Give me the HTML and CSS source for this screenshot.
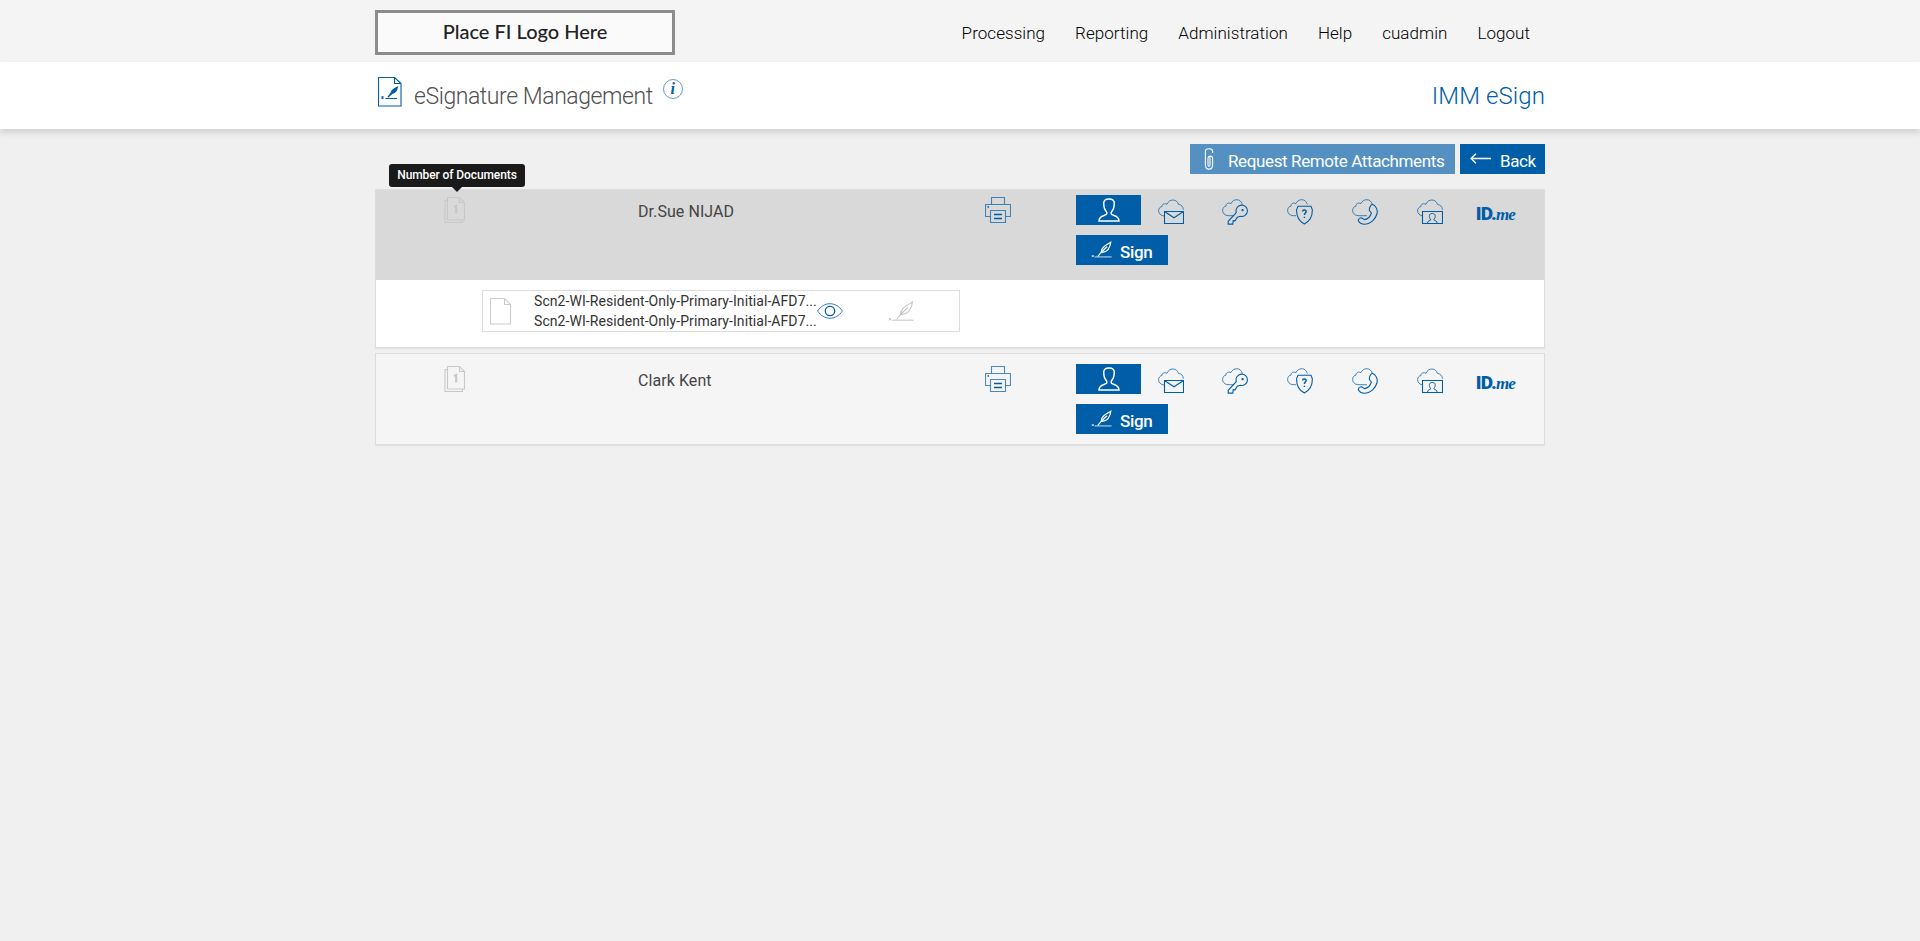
FILE: index.html
```html
<!DOCTYPE html>
<html lang="en">
<head>
  <meta charset="UTF-8" />
  <meta name="viewport" content="width=device-width, initial-scale=1.0"/>
  <title>eSignature Management</title>
  <link rel="stylesheet" href="styles.css">
</head>
<body>
  <!-- Icon sprite -->
  <svg class="sprite" width="0" height="0">
    <symbol id="docs" viewBox="0 0 22 26">
      <path d="M3.500 .500H15.500l5 5v17.500h-17zM15.500.500v5h5M3.500 3.500h-2.500v22h17.500v-2.500"/>
      <path d="M10 10l2.200-1v7.500" stroke-width="2.200"/>
    </symbol>
    <symbol id="doc" viewBox="0 0 22 27">
      <path d="M.5.500h14l6 6v19.500H.5zM14.500.500v6h6"/>
    </symbol>
    <symbol id="printer" viewBox="0 0 26 26">
      <path d="M6.500 7.500V.5h13v7M5.500 19.500H.5v-12h25v12h-5" opacity=".7"/>
      <path d="M5.500 13.500h15v12h-15z" opacity=".7"/>
      <path d="M9 17.500h8M9 21.500h8M2.500 10h1.500" stroke-width="1.300"/>
    </symbol>
    <symbol id="person" viewBox="0 0 22 24">
      <path d="M11 1c-3.800 0-5.500 1.800-5.300 4.600.1 3.300.5 5.900 2.700 8 .8 1.200.6 2.600-.4 3.100C5.500 18 1 18 1 23h20c0-5-4.500-5-7-6.300-1-.5-1.200-1.900-.4-3.100 2.200-2.100 2.600-4.700 2.700-8C16.500 2.800 14.800 1 11 1z"/>
    </symbol>
    <symbol id="cloud" viewBox="0 0 26 26">
      <path d="M6 17C2.500 16.700.6 14.200.6 11.800.6 9.300 2.200 7.700 4 7.600 3.700 5 6.500 4 9 5.300 10 2.500 12.300 1 14.800 1c3 0 5 1.800 5.600 4.400 2.900.3 4.900 2.300 5 5.300" stroke-width=".9" opacity=".8"/>
    </symbol>
    <symbol id="mail" viewBox="0 0 26 26">
      <use href="#cloud"/>
      <path d="M6.500 12.500h19v12h-19zM6.500 12.500l9.500 6.300 9.500-6.300"/>
    </symbol>
    <symbol id="cloud-open" viewBox="0 0 26 26">
      <path d="M9 16.700H6C2.500 16.500.6 14 .6 11.500.6 9 2.200 7.200 4 7.200 3.700 4.500 6.500 3.300 9 4.600 10 2 12.300.7 14.800.7c2.700 0 4.700 1.600 5.500 4.800" stroke-width=".9" opacity=".8"/>
    </symbol>
    <symbol id="key" viewBox="0 0 26 26">
      <use href="#cloud-open"/>
      <path d="M9 16.700h3" stroke-width=".9" opacity=".8"/>
      <path d="M14.300 13.500a5.700 5.700 0 1 1 4 3.800l-3 1-2.300 3.600-1.800-.3-.4 3.500H6.200v-2.800z"/>
      <circle cx="20.600" cy="11.200" r=".6"/>
    </symbol>
    <symbol id="shield" viewBox="0 0 26 26">
      <use href="#cloud-open"/>
      <path d="M11 7.200h13l1.300 3.300c.4 7-2.300 11.500-8 14.600-5.700-3.100-8-7.600-7.700-14.600z"/>
      <path d="M15.500 12.500c.3-2.300 4-1.700 3.600.3-.2 1.200-1.700 1.500-1.700 3.200M17.400 17.700v1.200" stroke-width="1.500"/>
    </symbol>
    <symbol id="phone" viewBox="0 0 26 26">
      <use href="#cloud-open"/>
      <path d="M9 16.700h6" stroke-width=".9" opacity=".8"/>
      <path d="M20.500 5.300c3.500 1.500 5.500 5.500 4.400 9.700-1.500 5.500-6.500 10-12 10.200-3 0-5.700-1.300-6.600-3.700 0-1.500 1.600-2.700 3.200-2.700l3 1.800c3-.6 6-3.400 6.900-6.600l-2-2.500c-.3-2.200 1-5.500 3.100-6.200z"/>
    </symbol>
    <symbol id="idcard" viewBox="0 0 26 26">
      <use href="#cloud"/>
      <path d="M5.500 12.500h20v12h-20z"/>
      <path d="M10.500 24c.2-2.500 2.300-2 3.300-3.200-2.200-3-2-6.300 1.500-6.300s3.700 3.300 1.500 6.300c1 1.200 3.100.7 3.300 3.200" stroke-width="1"/>
    </symbol>
    <symbol id="quill" viewBox="0 0 26 20">
      <path d="M4.500 19.200H25.500M1 17l2.400 2.400M3.400 17L1 19.400" stroke-width="1"/>
      <path d="M8.500 18.500l4-5C12.500 7.500 18 5 24.500 1c-.8 6-3.800 11.500-9.500 12.300l-3 .7M12.500 13.500c3-3 5-5 7.500-7"/>
    </symbol>
    <symbol id="eye" viewBox="0 0 26 16">
      <path d="M.6 8C7-1.700 19-1.700 25.400 8 19 17.700 7 17.700.6 8z" stroke-width=".8"/>
      <circle cx="13" cy="8" r="4.700" stroke-width="1.300"/>
    </symbol>
    <symbol id="clip" viewBox="0 0 10 22">
      <path d="M8.600 5V3.500C8.600-.2 1.400-.2 1.400 3.500V17c0 5.500 7.200 5.500 7.200 0v-6.500c0-3.300-4.600-3.300-4.600 0V17c0 1.500 2 1.500 2 0V8"/>
    </symbol>
    <symbol id="arrow" viewBox="0 0 21 11">
      <path d="M21 5.500H1M6 .7L1 5.500l5 4.800" stroke-width="1.300"/>
    </symbol>
    <symbol id="esign" viewBox="0 0 24 30">
      <path d="M.5.500h16l6.500 6v22.500H.5zM16.500.500v6H23"/>
      <path d="M7.500 21.500H19M3.500 19.500l2 2M5.500 19.500l-2 2"/>
      <path d="M10 20l3-4c.5-3 3-4.500 6.500-6-.6 3.500-2.500 6-5.500 6.500z" fill="currentColor"/>
    </symbol>
  </svg>

  <!-- Top navigation -->
  <header class="topbar">
    <div class="container topbar-inner">
      <div class="logo">Place FI Logo Here</div>
      <nav class="nav">
        <a>Processing</a>
        <a>Reporting</a>
        <a>Administration</a>
        <a>Help</a>
        <a>cuadmin</a>
        <a>Logout</a>
      </nav>
    </div>
  </header>

  <!-- Page title -->
  <div class="titlebar">
    <div class="container titlebar-inner">
      <svg class="icon title-icon"><use href="#esign"/></svg>
      <h1>eSignature Management</h1>
      <span class="info">i</span>
      <span class="product">IMM eSign</span>
    </div>
  </div>

  <main class="container">
    <div class="toolbar">
      <button class="btn btn-disabled"><svg class="icon clip"><use href="#clip"/></svg>Request Remote Attachments</button>
      <button class="btn btn-back"><svg class="icon arrow"><use href="#arrow"/></svg>Back</button>
    </div>

    <!-- Signer 1 -->
    <section class="signer">
      <div class="signer-head active">
        <div class="doc-count">
          <svg class="icon docs"><use href="#docs"/></svg>
          <span class="tooltip">Number of Documents</span>
        </div>
        <div class="name">Dr.Sue NIJAD</div>
        <svg class="icon printer"><use href="#printer"/></svg>
        <div class="actions">
          <div class="methods">
            <button class="btn person"><svg class="icon"><use href="#person"/></svg></button>
            <svg class="icon method"><use href="#mail"/></svg>
            <svg class="icon method"><use href="#key"/></svg>
            <svg class="icon method"><use href="#shield"/></svg>
            <svg class="icon method"><use href="#phone"/></svg>
            <svg class="icon method"><use href="#idcard"/></svg>
            <span class="idme">ID.<i>me</i></span>
          </div>
          <button class="btn sign"><svg class="icon"><use href="#quill"/></svg>Sign</button>
        </div>
      </div>
      <div class="documents">
        <div class="document">
          <svg class="icon doc"><use href="#doc"/></svg>
          <div class="doc-names">
            <div>Scn2-WI-Resident-Only-Primary-Initial-AFD7...</div>
            <div>Scn2-WI-Resident-Only-Primary-Initial-AFD7...</div>
          </div>
          <svg class="icon eye"><use href="#eye"/></svg>
          <svg class="icon quill"><use href="#quill"/></svg>
        </div>
      </div>
    </section>

    <!-- Signer 2 -->
    <section class="signer">
      <div class="signer-head">
        <div class="doc-count">
          <svg class="icon docs"><use href="#docs"/></svg>
        </div>
        <div class="name">Clark Kent</div>
        <svg class="icon printer"><use href="#printer"/></svg>
        <div class="actions">
          <div class="methods">
            <button class="btn person"><svg class="icon"><use href="#person"/></svg></button>
            <svg class="icon method"><use href="#mail"/></svg>
            <svg class="icon method"><use href="#key"/></svg>
            <svg class="icon method"><use href="#shield"/></svg>
            <svg class="icon method"><use href="#phone"/></svg>
            <svg class="icon method"><use href="#idcard"/></svg>
            <span class="idme">ID.<i>me</i></span>
          </div>
          <button class="btn sign"><svg class="icon"><use href="#quill"/></svg>Sign</button>
        </div>
      </div>
    </section>
  </main>
</body>
</html>
```
FILE: styles.css
```css
* {
  box-sizing: border-box;
}

body {
  margin: 0;
  background: #f0f0f0;
  color: #444;
  font-family: Roboto, sans-serif;
}

.sprite {
  display: block;
}

.container {
  width: 1170px;
  margin: 0 auto;
}

.icon {
  display: block;
  flex: none;
  fill: none;
  stroke: currentColor;
  stroke-width: 1.1;
  color: #005da8;
}

/* Top bar */
.topbar {
  height: 62px;
  background: #f4f4f4;
}

.topbar-inner {
  display: flex;
  justify-content: space-between;
  padding-top: 10px;
}

.logo {
  width: 300px;
  height: 45px;
  border: 3px solid #8c8c8c;
  background: #fafafa;
  color: #222;
  font: 500 20px/37px Lato, sans-serif;
  text-align: center;
}

.nav {
  display: flex;
  gap: 30px;
  padding: 12px 15px 0 0;
  font-size: 17px;
  font-weight: 300;
  line-height: 22px;
  letter-spacing: 0.05px;
  color: #000;
}

/* Title bar */
.titlebar {
  height: 67px;
  background: #fff;
  box-shadow: 0 4px 6px rgba(0, 0, 0, 0.12);
}

.titlebar-inner {
  display: flex;
  align-items: flex-start;
}

.title-icon {
  width: 24px;
  height: 30px;
  margin: 15px 0 0 3px;
}

h1 {
  margin: 21px 0 0 12px;
  color: #505050;
  font-size: 23px;
  font-weight: 300;
  line-height: 28px;
  letter-spacing: -0.43px;
}

.info {
  width: 20px;
  height: 20px;
  margin: 17px 0 0 10px;
  border: 1px solid #6b9cc7;
  border-radius: 50%;
  color: #005da8;
  font: italic bold 16px/17px "Liberation Serif", serif;
  text-align: center;
}

.product {
  margin: 20px 0 0 auto;
  color: #005da8;
  font-size: 24px;
  font-weight: 300;
  line-height: 28px;
  letter-spacing: 0.1px;
}

/* Buttons */
.btn {
  display: flex;
  height: 30px;
  padding: 0;
  border: 0;
  background: #005da8;
  color: #fff;
  font: 400 17px/34px Roboto, sans-serif;
  white-space: nowrap;
}

.btn .icon {
  color: #fff;
}

.toolbar {
  display: flex;
  justify-content: flex-end;
  gap: 5px;
  padding: 15px 0;
}

.toolbar .btn {
  letter-spacing: -0.38px;
}

.btn-disabled {
  width: 265px;
  background: #5490c1;
}

.btn-back {
  width: 85px;
}

.clip {
  width: 10px;
  height: 22px;
  margin: 4px 14px 0 14px;
}

.arrow {
  width: 21px;
  height: 11px;
  margin: 9px 9px 0 10px;
}

/* Signers */
.signer {
  margin-bottom: 5px;
  border: 1px solid #ddd;
  background: #fff;
  box-shadow: 0 1px 1px rgba(0, 0, 0, 0.06);
}

.signer-head {
  display: grid;
  grid-template-columns: 263px 346px 91px 1fr;
  align-items: start;
  height: 90px;
  padding-top: 10px;
  background: #f5f5f5;
}

.signer-head.active {
  padding-top: 5px;
  background: #d9d9d9;
}

.doc-count {
  position: relative;
  padding: 2px 0 0 68px;
}

.docs {
  width: 22px;
  height: 26px;
  color: #c8c8c8;
}

.tooltip {
  position: absolute;
  left: 13px;
  bottom: 36px;
  width: 136px;
  height: 23px;
  border-radius: 3px;
  background: #1a1a1a;
  color: #fff;
  font-size: 12px;
  font-weight: 500;
  line-height: 22px;
  letter-spacing: -0.1px;
  text-align: center;
}

.tooltip::after {
  content: "";
  position: absolute;
  left: 63px;
  top: 23px;
  border: 5px solid transparent;
  border-top-color: #1a1a1a;
  border-bottom: 0;
}

.name {
  padding-top: 7px;
  margin-left: -1px;
  font-size: 16px;
  line-height: 20px;
  letter-spacing: 0.07px;
}

.printer {
  width: 26px;
  height: 26px;
  margin-top: 2px;
}

.methods {
  display: flex;
  height: 30px;
}

.person {
  width: 65px;
  justify-content: center;
  margin-right: 16.5px;
}

.person .icon {
  width: 22px;
  height: 24px;
  margin-top: 3px;
  stroke-width: 1.5;
}

.method {
  width: 26px;
  height: 26px;
  margin: 4px 38.8px 0 0;
}

/* the ID.me wordmark is wider than the icons */
.method:nth-last-child(2) {
  margin-right: 33px;
}

.idme {
  margin-top: 8px;
  color: #005da8;
  font-size: 19px;
  font-weight: 900;
  line-height: 22px;
  letter-spacing: -0.8px;
}

.idme i {
  font: italic bold 17px/22px "Liberation Serif", serif;
  letter-spacing: -0.9px;
}

.sign {
  width: 92px;
  margin-top: 10px;
  font-weight: 500;
  letter-spacing: -0.3px;
}

.sign .icon {
  width: 21px;
  height: 17px;
  margin: 6px 8px 0 15px;
  stroke-width: 1.5;
}

/* Documents */
.documents {
  height: 67px;
  padding: 10px 0 0 106px;
}

.document {
  display: flex;
  width: 478px;
  height: 42px;
  border: 1px solid #ddd;
}

.doc {
  width: 22px;
  height: 27px;
  margin: 7px 22px 0 7px;
  color: #ccc;
}

.doc-names {
  width: 283px;
  color: #333;
  font-size: 14px;
  line-height: 20px;
  letter-spacing: 0.07px;
  white-space: nowrap;
}

.eye {
  width: 26px;
  height: 16px;
  margin: 12px 45px 0 0;
}

.quill {
  width: 26px;
  height: 20px;
  margin-top: 10px;
  color: #c4c4c4;
}
```
